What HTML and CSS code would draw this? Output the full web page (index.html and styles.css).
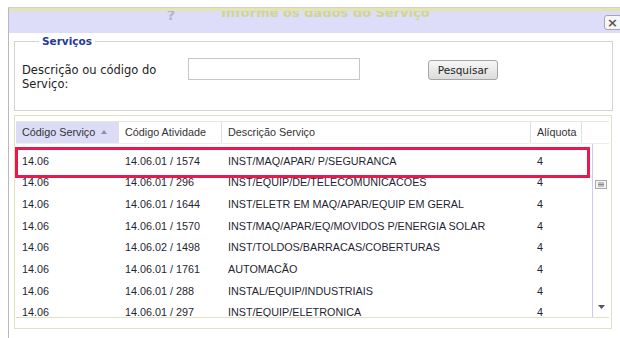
FILE: index.html
```html
<!DOCTYPE html>
<html lang="pt">
<head>
<meta charset="utf-8">
<title>Serviços</title>
<link rel="stylesheet" href="styles.css">
</head>
<body>
<div class="dialog">
  <div class="titlebar">
    <span class="help">?</span>
    <span class="title">Informe os dados do Serviço</span>
    <button class="close" type="button">×</button>
  </div>
  <div class="content">
    <fieldset class="search">
      <legend>Serviços</legend>
      <div class="search-row">
        <label class="search-label" for="q">Descrição ou código do Serviço:</label>
        <input id="q" class="search-input" type="text">
        <button class="btn" type="button">Pesquisar</button>
      </div>
    </fieldset>
    <div class="grid-panel">
      <div class="grid-head">
        <div class="th c1 sorted">Código Serviço <span class="sort"></span></div>
        <div class="th c2">Código Atividade</div>
        <div class="th c3">Descrição Serviço</div>
        <div class="th c4">Alíquota</div>
        <div class="th c5"></div>
      </div>
      <div class="grid-body">
        <div class="rows">
          <div class="row"><span class="c1">14.06</span><span class="c2">14.06.01 / 1574</span><span class="c3">INST/MAQ/APAR/ P/SEGURANCA</span><span class="c4">4</span></div>
          <div class="row"><span class="c1">14.06</span><span class="c2">14.06.01 / 296</span><span class="c3">INST/EQUIP/DE/TELECOMUNICACOES</span><span class="c4">4</span></div>
          <div class="row"><span class="c1">14.06</span><span class="c2">14.06.01 / 1644</span><span class="c3">INST/ELETR EM MAQ/APAR/EQUIP EM GERAL</span><span class="c4">4</span></div>
          <div class="row"><span class="c1">14.06</span><span class="c2">14.06.01 / 1570</span><span class="c3">INST/MAQ/APAR/EQ/MOVIDOS P/ENERGIA SOLAR</span><span class="c4">4</span></div>
          <div class="row"><span class="c1">14.06</span><span class="c2">14.06.02 / 1498</span><span class="c3">INST/TOLDOS/BARRACAS/COBERTURAS</span><span class="c4">4</span></div>
          <div class="row"><span class="c1">14.06</span><span class="c2">14.06.01 / 1761</span><span class="c3">AUTOMACÃO</span><span class="c4">4</span></div>
          <div class="row"><span class="c1">14.06</span><span class="c2">14.06.01 / 288</span><span class="c3">INSTAL/EQUIP/INDUSTRIAIS</span><span class="c4">4</span></div>
          <div class="row"><span class="c1">14.06</span><span class="c2">14.06.01 / 297</span><span class="c3">INST/EQUIP/ELETRONICA</span><span class="c4">4</span></div>
        </div>
        <div class="vscroll">
          <svg class="grip" width="12" height="9" viewBox="0 0 12 9"><rect x="0.5" y="0.5" width="11" height="8" fill="#f4f4f4" stroke="#a9a9a9"/><path d="M3 3h6M3 4.5h6M3 6h6" stroke="#8a8a8a" stroke-width="1"/></svg>
          <svg class="arrow" width="7" height="4" viewBox="0 0 7 4"><path d="M0 0h7L3.5 4z" fill="#555"/></svg>
        </div>
      </div>
      <div class="grid-foot"></div>
      <div class="highlight"></div>
    </div>
  </div>
</div>
</body>
</html>
```
FILE: styles.css
```css
html, body {
  margin: 0;
  padding: 0;
  background: #fff;
  overflow: hidden;
}
body {
  width: 620px;
  height: 338px;
}
.dialog {
  margin: 7px 0 0 8px;
  width: 620px;
  height: 331px;
  border-left: 1px solid #b9b9b9;
  border-top: 1px solid #d0d0d0;
  background: #fff;
  overflow: hidden;
}
.titlebar {
  display: flex;
  align-items: flex-start;
  height: 22px;
  border-top: 3px solid #e4e4ae;
  background: #dddcf9;
  overflow: hidden;
  font-family: "DejaVu Sans", Verdana, sans-serif;
}
.help {
  margin: -4px 0 0 158px;
  font-size: 14px;
  font-weight: bold;
  color: #b3b3c4;
  line-height: 16px;
}
.title {
  margin: -6px 0 0 46px;
  font-size: 13px;
  font-weight: bold;
  line-height: 16px;
  color: #d2d494;
}
.close {
  margin: 4px 7px 0 auto;
  width: 18px;
  height: 15px;
  padding: 0 0 0 2px;
  border: 1px solid #a6a6a6;
  border-radius: 3px;
  background: #f6f6f6;
  font-family: "DejaVu Sans", sans-serif;
  font-size: 13px;
  font-weight: bold;
  line-height: 12px;
  color: #555;
  text-align: left;
}
.content {
  padding: 2px 16px 0 5px;
}
.search {
  margin: 0;
  padding: 11px 6px 19px 7px;
  border: 1px solid #d4d4cc;
  min-width: 0;
}
.search legend {
  margin-left: 17px;
  padding: 0 3px;
  font-family: "DejaVu Sans", Verdana, sans-serif;
  font-size: 10.5px;
  font-weight: bold;
  line-height: 12px;
  color: #23399c;
}
.search-row {
  display: flex;
  align-items: flex-start;
}
.search-label {
  width: 140px;
  margin: 5px 26px 0 0;
  font-family: "DejaVu Sans", Verdana, sans-serif;
  font-size: 11.5px;
  line-height: 14px;
  color: #222;
}
.search-input {
  box-sizing: border-box;
  width: 172px;
  height: 22px;
  margin: 0;
  border: 1px solid #c6c6c6;
  background: #fff;
}
.btn {
  box-sizing: border-box;
  width: 70px;
  height: 20px;
  margin: 2px 0 0 68px;
  padding: 0;
  border: 1px solid #a5a5a5;
  border-radius: 3px;
  background: linear-gradient(#f7f7f7, #dcdcdc);
  font-family: "DejaVu Sans", Verdana, sans-serif;
  font-size: 10.5px;
  color: #1e1e1e;
}
.grid-panel {
  position: relative;
  box-sizing: border-box;
  width: 598px;
  margin-top: 4px;
  padding: 5px 2px 0 1px;
  border: 1px solid #e2e1bf;
  font-family: "Liberation Sans", Arial, sans-serif;
  font-size: 10.8px;
}
.grid-head {
  display: flex;
  height: 23px;
  box-sizing: border-box;
  border-top: 1px solid #e6e6e6;
  border-bottom: 1px solid #ececec;
}
.th {
  box-sizing: border-box;
  padding-left: 6px;
  border-right: 1px solid #dfdfdf;
  line-height: 21px;
  color: #333;
  white-space: nowrap;
}
.th.sorted {
  background: #dcdcf6;
}
.sort {
  display: inline-block;
  width: 0;
  height: 0;
  margin: 0 0 2px 3px;
  border-left: 3.5px solid transparent;
  border-right: 3.5px solid transparent;
  border-bottom: 4px solid #8d8da4;
  vertical-align: middle;
}
.c1 { width: 103px; }
.c2 { width: 103px; }
.c3 { width: 309px; }
.c4 { width: 51px; }
.c5 { flex: 1; border-right: none; }
.grid-body {
  display: flex;
  height: 174px;
  box-sizing: border-box;
  border-bottom: 1px solid #e2e1bf;
  overflow: hidden;
}
.rows {
  flex: 1;
  padding-top: 6.5px;
}
.row {
  display: flex;
  height: 21.7px;
  line-height: 21.7px;
  color: #1f1f33;
  white-space: nowrap;
}
.row span {
  box-sizing: border-box;
  padding-left: 6px;
  flex-shrink: 0;
}
.vscroll {
  display: flex;
  flex-direction: column;
  align-items: center;
  width: 16px;
  border-left: 1px solid #cacaf2;
  background: #fff;
}
.grip {
  margin-top: 36px;
}
.arrow {
  margin-top: auto;
  margin-bottom: 8px;
}
.grid-foot {
  height: 10px;
}
.highlight {
  position: absolute;
  left: 0;
  top: 31px;
  width: 575px;
  height: 31px;
  box-sizing: border-box;
  border: 3px solid #e8194d;
}
```
